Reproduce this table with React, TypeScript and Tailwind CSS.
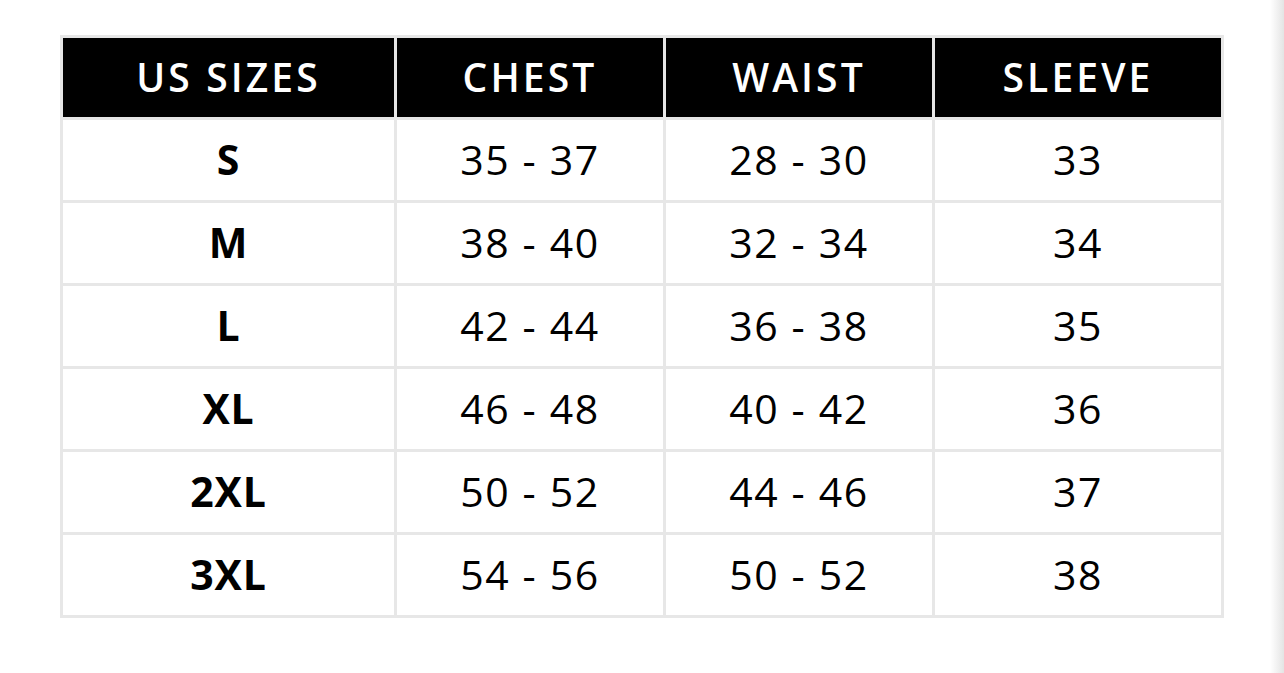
import React from "react";

const rows = [
  ["S", "35 - 37", "28 - 30", "33"],
  ["M", "38 - 40", "32 - 34", "34"],
  ["L", "42 - 44", "36 - 38", "35"],
  ["XL", "46 - 48", "40 - 42", "36"],
  ["2XL", "50 - 52", "44 - 46", "37"],
  ["3XL", "54 - 56", "50 - 52", "38"],
];

const headers = ["US SIZES", "CHEST", "WAIST", "SLEEVE"];

export default function App() {
  return (
    <div
      className="flex h-[673px] w-[1284px] bg-white"
      style={{ fontFamily: '"Open Sans", "Noto Sans", sans-serif' }}
    >
      <div className="flex-1 pl-[60px] pt-[35px]">
        <div className="grid w-[1164px] grid-cols-[331px_266px_266px_286px] gap-[3px] bg-[#e7e7e7] p-[3px]">
          {headers.map((h) => (
            <div
              key={h}
              className="flex h-[79px] items-center justify-center bg-black text-[39px] font-semibold tracking-[0.08em] text-white"
            >
              {h}
            </div>
          ))}
          {rows.map((r) =>
            r.map((c, i) => (
              <div
                key={r[0] + i}
                className={`flex h-[80px] items-center justify-center bg-white text-[41px] text-black ${
                  i === 0 ? "font-bold tracking-[0.02em]" : "font-normal tracking-[0.04em]"
                }`}
              >
                {c}
              </div>
            ))
          )}
        </div>
      </div>
      <div className="w-[14px] bg-gradient-to-r from-white to-[#e4e4e4]" />
    </div>
  );
}
